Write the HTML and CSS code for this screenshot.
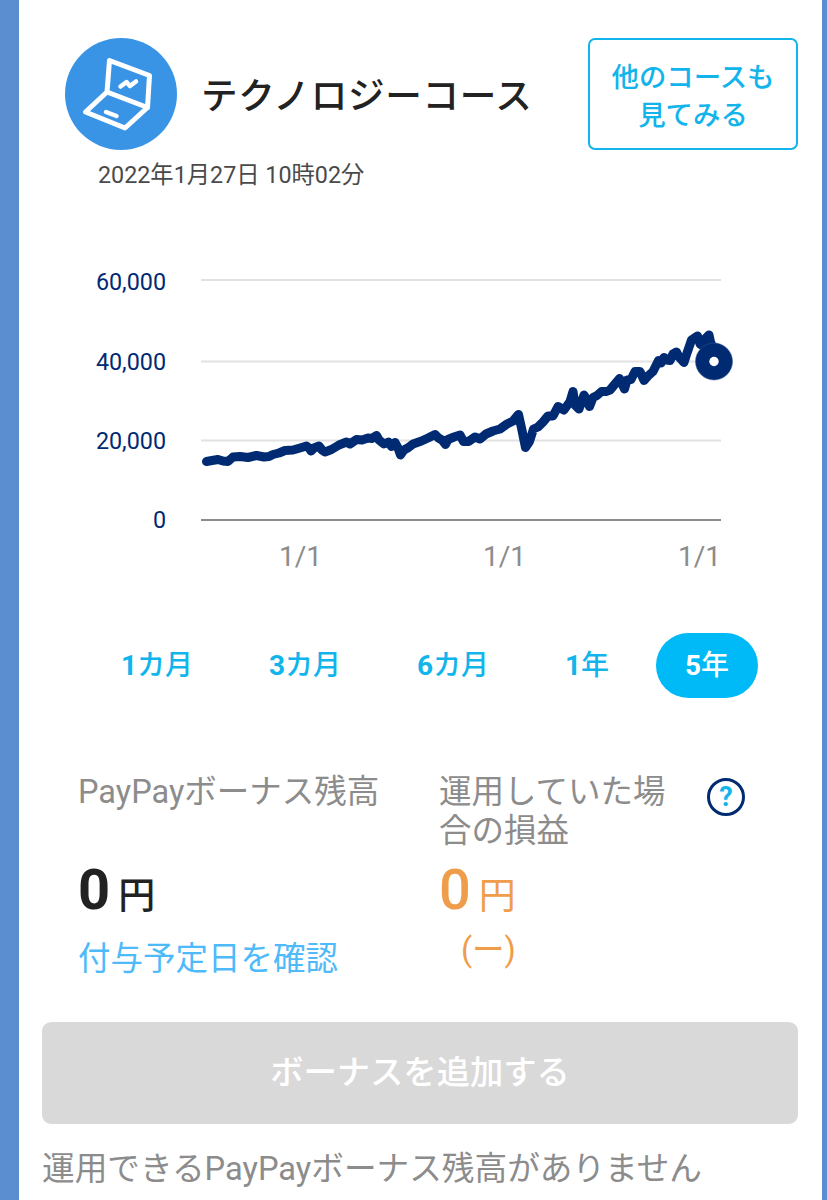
FILE: index.html
```html
<!DOCTYPE html>
<html lang="ja">
<head>
  <meta charset="UTF-8" />
  <meta name="viewport" content="width=device-width, initial-scale=1.0"/>
  <title>テクノロジーコース</title>
  <link rel="stylesheet" href="styles.css">
</head>
<body>
  <main class="card">
    <header class="course">
      <svg class="course-icon" viewBox="0 0 112 112" fill="none" stroke="#fff" stroke-linecap="round" stroke-linejoin="round">
        <circle cx="56" cy="56" r="56" fill="#3a94e6" stroke="none"/>
        <path d="M44.5 22.5 L84.5 37.5 L82.5 69.5 L42 54 Z" stroke-width="5"/>
        <path d="M42 54 L20.5 74 L60 90 L82.5 69.5" stroke-width="5"/>
        <path d="M55.5 48.5 L61.5 44 L65 48 L71 43.5" stroke-width="4.5"/>
        <path d="M41 74 L51.5 78" stroke-width="4.5"/>
      </svg>
      <h1>テクノロジーコース</h1>
      <button class="other-btn">他のコースも<br>見てみる</button>
    </header>
    <p class="date">2022年1月27日 10時02分</p>

    <svg class="chart" viewBox="19 250 803 340">
      <g class="grid">
        <path d="M201 280H721M201 361.5H721M201 440.5H721"/>
        <path class="base" d="M201 520H721"/>
      </g>
      <g class="y-label">
        <text x="166" y="290">60,000</text>
        <text x="166" y="369.5">40,000</text>
        <text x="166" y="448.5">20,000</text>
        <text x="166" y="528">0</text>
      </g>
      <g class="x-label">
        <text x="300.5" y="565.5">1/1</text>
        <text x="504.5" y="565.5">1/1</text>
        <text x="699.5" y="565.5">1/1</text>
      </g>
      <polyline class="line" points="206.5,461.5 212,460.5 218,459.5 223,461 228,461.5 233,457 240,456.5 248,457.5 256.5,455.5 264,457 269,456.5 273,454.5 279,453 285,450.5 293,450 300,448 306.5,446 309,448 311,451 314,448 319,446 322,450 325,452 331.5,449.5 339,445 346.5,442 350,444 356.5,439.5 362,440 368,438 372,438.5 376.5,435.5 379,440 384,444 388.5,442 391.5,446.5 395,442.5 398,448 400.5,455 404,450 408.5,447.5 413,444 421.5,441 428,438 435,434.5 438.5,438 442,440 445.5,444.5 448,439.5 454,437 460,435 463.5,441.5 468.5,441.5 475,437 480,439 486,434 493,431 500,429 507,424 513,421 518.5,414.5 521.5,428 525.5,447.5 529.5,441.5 533.5,429 538,427 543,422 548,416 553,416 558,406.5 564,410 570,401.5 573,391.5 575,405 579,409 584,395 589.5,406.5 593,397.5 597,395.5 601.5,391.5 606,391.5 610,390 615,384 619.5,378.5 624.5,389 627,380 631,379.5 635,371.5 640,371.5 644,380.5 648,376 653,371.5 658.5,360.5 661,363 664,357.5 667,360 670,360.5 673,354 676.5,352 679,357 684,362.5 687,353 691.5,340 697.5,336 700,344 703.5,346 706,338 709,335 710.5,342 714,350"/>
      <circle class="marker" cx="714" cy="361.5" r="18.5"/>
      <circle cx="714" cy="361.5" r="4.7" fill="#fff"/>
    </svg>

    <nav class="range">
      <button><b>1</b>カ月</button>
      <button><b>3</b>カ月</button>
      <button><b>6</b>カ月</button>
      <button><b>1</b>年</button>
      <button class="active"><b>5</b>年</button>
    </nav>

    <section class="summary">
      <div class="balance">
        <h2>PayPayボーナス残高</h2>
        <p class="amount"><strong>0</strong><span>円</span></p>
        <a class="schedule" href="#">付与予定日を確認</a>
      </div>
      <div class="profit">
        <h2>運用していた場合の損益</h2>
        <p class="amount"><strong>0</strong><span>円</span></p>
        <p class="rate">(ー)</p>
      </div>
      <button class="help">?</button>
    </section>

    <button class="add-btn" disabled>ボーナスを追加する</button>
    <p class="note">運用できるPayPayボーナス残高がありません</p>
  </main>
</body>
</html>
```
FILE: styles.css
```css
* {
  box-sizing: border-box;
}

body {
  margin: 0;
  background: #5b8ed1;
  font-family: Roboto, "Noto Sans CJK JP", sans-serif;
  color: #222;
}

h1, h2, p {
  margin: 0;
  font-weight: 400;
}

button {
  font-family: inherit;
  padding: 0;
  border: none;
  background: none;
}

.card {
  margin: 0 5px 0 19px;
  height: 1200px;
  padding: 38px 24px 0 23px;
  background: #fff;
  overflow: hidden;
}

.course {
  display: flex;
  align-items: center;
  height: 112px;
  padding-left: 23px;
}

.course-icon {
  width: 112px;
  height: 112px;
}

h1 {
  margin-left: 24px;
  padding-top: 6px;
  font-size: 36.6px;
  font-weight: 500;
  line-height: 50px;
  letter-spacing: 0.7px;
  white-space: nowrap;
}

.other-btn {
  width: 210px;
  height: 112px;
  margin-left: auto;
  padding-top: 5px;
  border: 2px solid #12b4ec;
  border-radius: 7px;
  color: #12b4ec;
  font-size: 27.4px;
  font-weight: 500;
  line-height: 38px;
}

.date {
  padding: 9px 0 0 56px;
  font-size: 23.3px;
  line-height: 32px;
  color: #4a4a4a;
}

.chart {
  display: block;
  width: 803px;
  height: 340px;
  margin: 59px 0 0 -23px;
}

.grid path {
  stroke: #e2e2e2;
  stroke-width: 2;
}

.grid .base {
  stroke: #8c8c8c;
}

.y-label {
  font-size: 23.3px;
  fill: #002a72;
  text-anchor: end;
}

.x-label {
  font-size: 28px;
  fill: #8c8c8c;
  text-anchor: middle;
}

.line {
  fill: none;
  stroke: #002a72;
  stroke-width: 9;
  stroke-linecap: round;
  stroke-linejoin: round;
}

.marker {
  fill: #002a72;
  stroke: #33568f;
  stroke-width: 0.5;
}

.range {
  display: flex;
  justify-content: space-between;
  margin: 43px 40px 0 50px;
}

.range button {
  height: 65px;
  padding: 0 29px 6px;
  border-radius: 33px;
  color: #12b4ec;
  font-size: 28px;
  font-weight: 500;
}

.range .active {
  background: #00b9f7;
  color: #fff;
}

.summary {
  display: flex;
  align-items: flex-start;
  height: 250px;
  margin-top: 74px;
  padding-left: 36px;
}

.balance {
  width: 361px;
}

.profit {
  width: 240px;
}

h2 {
  height: 77px;
  padding-top: 1px;
  font-size: 32.5px;
  line-height: 39px;
  color: #8c8c8c;
}

.amount {
  height: 82px;
  font-size: 37px;
  line-height: 82px;
}

.amount strong {
  margin-right: 8px;
  font-size: 56px;
}

.amount span {
  font-weight: 500;
}

.schedule {
  display: block;
  padding-top: 4px;
  font-size: 32.5px;
  line-height: 48px;
  color: #4fbaf9;
  text-decoration: none;
}

.profit .amount,
.rate {
  color: #ef9d4a;
}

.profit .amount strong {
  font-weight: 500;
}

.profit .amount span {
  font-weight: 400;
}

.rate {
  padding-left: 22px;
  font-size: 32.5px;
  line-height: 38px;
}

.help {
  width: 38px;
  height: 38px;
  margin: 6px 0 0 28px;
  border: 3px solid #002a72;
  border-radius: 50%;
  color: #12b4ec;
  font-size: 27px;
  font-weight: 700;
  line-height: 32px;
}

.add-btn {
  display: block;
  width: 100%;
  height: 102px;
  padding-bottom: 8px;
  border-radius: 9px;
  background: #d9d9d9;
  color: #fff;
  font-size: 33.3px;
  font-weight: 500;
}

.note {
  margin-top: 22px;
  font-size: 32.65px;
  line-height: 46px;
  color: #8c8c8c;
}
```
